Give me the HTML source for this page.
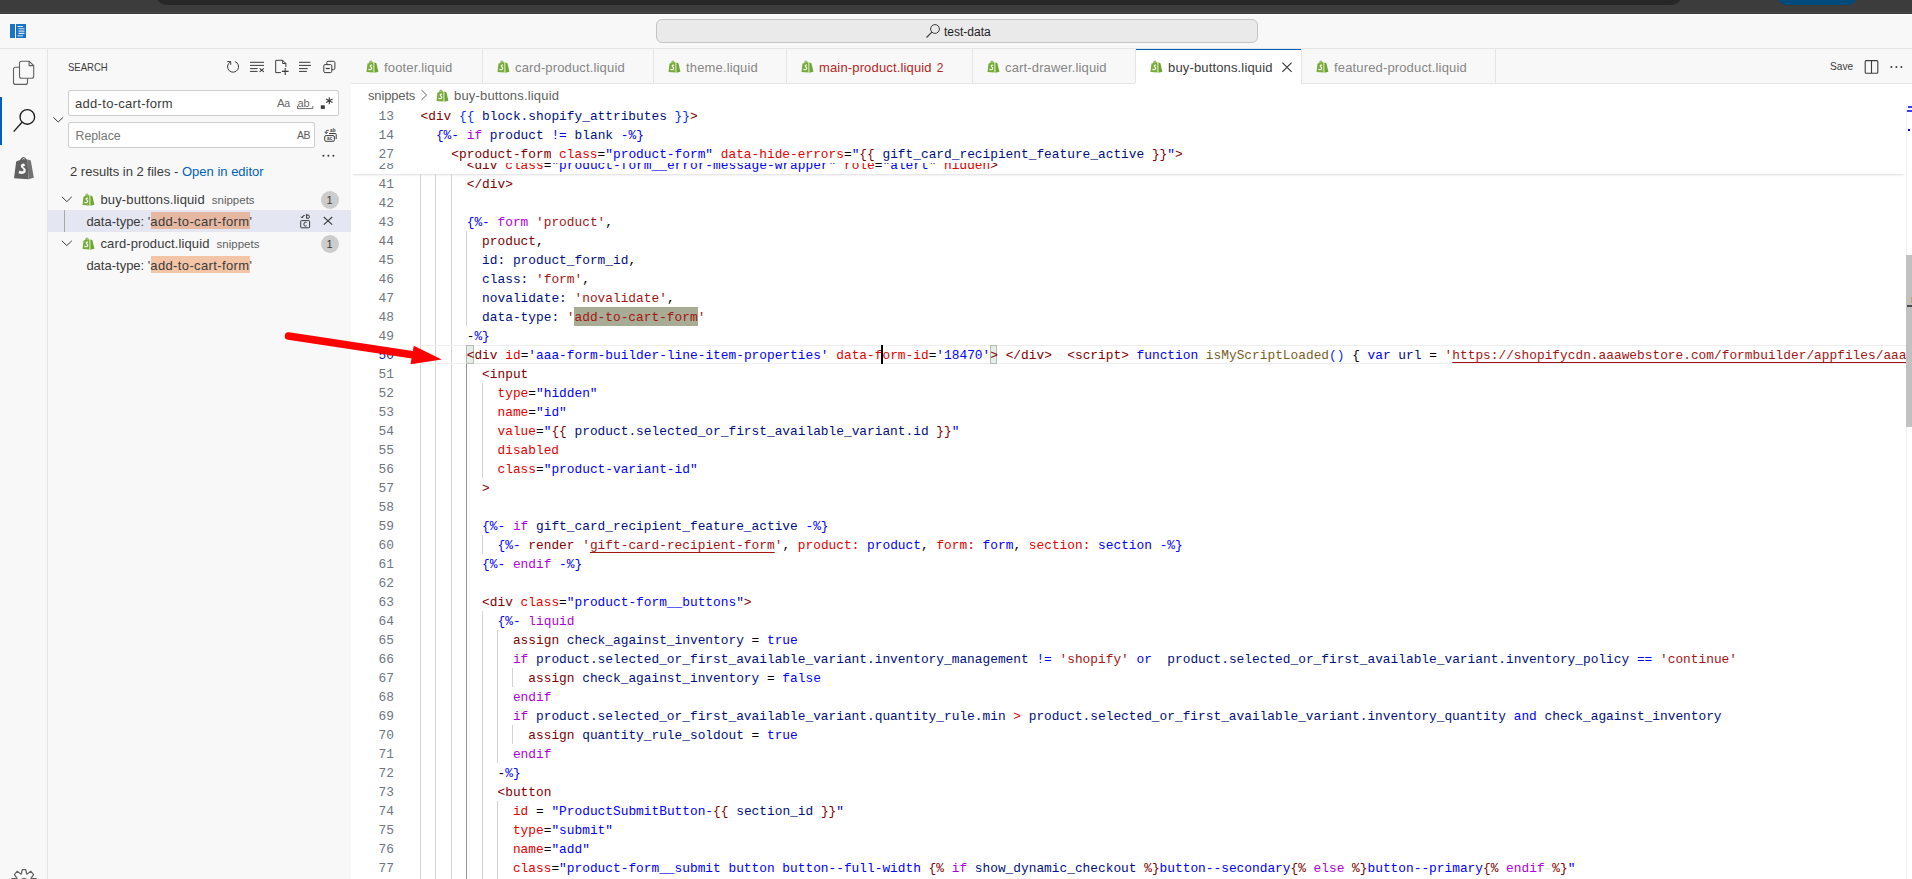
<!DOCTYPE html><html><head><meta charset="utf-8"><style>*{box-sizing:border-box}
html,body{margin:0;padding:0}
body{width:1912px;height:879px;overflow:hidden;position:relative;background:#f8f8f8;font-family:"Liberation Sans",sans-serif;color:#3b3b3b}
.abs{position:absolute}
#topstrip{left:0;top:0;width:1912px;height:15px;background:linear-gradient(#3c3c3c 0,#3c3c3c 12px,#464946 12px,#464946 13px,#383a38 13px,#383a38 14px,#ffffff 14px,#ffffff 15px)}
#topdark{left:156px;top:-10px;width:1526px;height:15px;background:#272727;border-radius:0 0 11px 11px}
#topblue{left:1777px;top:-10px;width:81px;height:15px;background:#004a7c;border-radius:0 0 10px 10px}
#titlebar{left:0;top:15px;width:1912px;height:34px;background:#f8f8f8;border-bottom:1px solid #e5e5e5}
#cmd{left:656px;top:19px;width:602px;height:24px;background:#eaeaea;border:1px solid #c5c5c5;border-radius:6px}
#cmdtext{left:944px;top:24px;font-size:12px;color:#1e1e1e;white-space:pre}
#activity{left:0;top:49px;width:48px;height:830px;background:#f8f8f8;border-right:1px solid #e5e5e5}
#actind{left:0;top:97px;width:2px;height:48px;background:#005fb8}
#sidebar{left:48px;top:49px;width:304px;height:830px;background:#f8f8f8;border-right:1px solid #e5e5e5}
.txt{position:absolute;white-space:pre;line-height:1}
#tabs{left:351px;top:49px;width:1561px;height:35px;background:#f8f8f8;border-bottom:1px solid #e5e5e5}
.tab{position:absolute;top:0;height:35px;border-right:1px solid #e5e5e5;background:#f8f8f8}
.tab.active{background:#fff;border-top:1px solid #005fb8;height:35px}
.tabt{position:absolute;top:11px;font-size:13px;color:#868686;white-space:pre;line-height:1}
#editor{left:351px;top:84px;width:1561px;height:795px;background:#fff}
.code{position:absolute;padding-top:1px;left:420px;font-family:"Liberation Mono",monospace;font-size:12.83px;white-space:pre;line-height:19px;height:19px}
.ln{position:absolute;padding-top:1px;left:360px;width:34px;text-align:right;font-family:"Liberation Mono",monospace;font-size:12.83px;line-height:19px;height:19px;color:#6e7681}
.t{color:#800000}.a{color:#e50000}.s{color:#0000ff}.q{color:#a31515}.k{color:#af00db}.b{color:#0000ff}.v{color:#001080}.p{color:#000}.f{color:#795e26}
.guide{position:absolute;width:1px;background:#d3d3d3}
.ul{text-decoration:underline;text-decoration-color:#a31515;text-underline-offset:3px;text-decoration-thickness:1px}
.br{color:#0431fa}
</style></head><body><div id="topstrip" class="abs"></div><div id="topdark" class="abs"></div><div id="topblue" class="abs"></div>
<div id="titlebar" class="abs"></div>
<svg class="abs" style="left:10px;top:24px" width="17" height="15" viewBox="0 0 17 15">
<rect x="0" y="0" width="5" height="14" fill="#1a73c3"/>
<rect x="6" y="0" width="10" height="14" fill="#1a73c3"/>
<rect x="7.5" y="2" width="5.5" height="1" fill="#dfeaf5"/>
<rect x="8.5" y="4.3" width="6" height="1" fill="#dfeaf5"/>
<rect x="8.5" y="6.3" width="6" height="2" fill="#9cc3e6"/>
<rect x="8.5" y="9" width="6" height="1" fill="#dfeaf5"/>
<rect x="7.5" y="11.3" width="5.5" height="1" fill="#dfeaf5"/>
</svg>
<div id="cmd" class="abs"></div>
<svg class="abs" style="left:925px;top:23px" width="16" height="16" viewBox="0 0 16 16">
<circle cx="10" cy="6" r="4.4" fill="none" stroke="#3b3b3b" stroke-width="1"/>
<line x1="6.9" y1="9.1" x2="1.5" y2="14.5" stroke="#3b3b3b" stroke-width="1.1"/>
</svg>
<div class="txt" style="left:944px;top:26px;font-size:12px;color:#1e1e1e">test-data</div>
<div id="activity" class="abs"></div>
<div id="actind" class="abs"></div>
<svg class="abs" style="left:12px;top:60px" width="24" height="26" viewBox="0 0 24 26">
<path d="M7.5 7.3 H3.5 Q1.5 7.3 1.5 9.3 V22.4 Q1.5 24.4 3.5 24.4 H13.5 Q15.5 24.4 15.5 22.4 V18.2" fill="none" stroke="#616161" stroke-width="1.1"/>
<path d="M9.5 1.3 H17.1 L21.7 5.6 V16.2 Q21.7 18.2 19.7 18.2 H9.5 Q7.5 18.2 7.5 16.2 V3.3 Q7.5 1.3 9.5 1.3 Z" fill="none" stroke="#616161" stroke-width="1.1"/>
<path d="M17.1 1.3 V5.6 H21.7" fill="none" stroke="#616161" stroke-width="1.1"/>
</svg>
<svg class="abs" style="left:12px;top:107px" width="26" height="28" viewBox="0 0 26 28">
<circle cx="15.3" cy="9.9" r="7.3" fill="none" stroke="#1f1f1f" stroke-width="1.35"/>
<line x1="10" y1="15.2" x2="1.7" y2="24.6" stroke="#1f1f1f" stroke-width="1.35"/>
</svg>
<svg class="abs" style="left:13px;top:156px" width="22" height="24" viewBox="0 0 22 24">
<path d="M1 22.2 L3.2 5.4 Q5 4.6 7 4 Q8.5 0.8 10.8 1 Q12.4 1.2 13.4 3.2 L14.6 3.4 L15.4 23.3 Z" fill="#616161"/>
<path d="M14.6 3.4 Q16 3.6 17.8 4.6 L20.8 21.8 L15.4 23.3 Z" fill="#727272"/>
<path d="M9.5 3.2 Q10.5 1.9 11.6 3" fill="none" stroke="#f8f8f8" stroke-width="0.9"/>
<path d="M11.2 7.6 Q8.4 7.4 7.8 9.6 Q7.5 11.6 9.8 12.8 Q11 13.6 10.4 14.8 Q9.4 16 6.3 14.4 L5.5 17.2 Q8.6 18.6 11.3 17.3 Q13.4 15.8 12.6 13.3 Q12 12 10.6 11.2 Q9.7 10.4 10.6 9.9 Q11.6 9.6 12.4 10.2 Z" fill="#f8f8f8"/>
</svg>
<svg class="abs" style="left:0px;top:860px" width="48" height="19" viewBox="0 860 48 19">
<path d="M11.5 878.6 H17.2 L14.4 874.6 L17.3 871.2 L21.3 874.4 L22.2 869.7 H25.8 L26.7 874.4 L30.7 871.2 L33.6 874.6 L30.8 878.6 H36.5" fill="none" stroke="#616161" stroke-width="1.2" stroke-linejoin="bevel"/>
<circle cx="24" cy="881.5" r="3.6" fill="#616161"/>
</svg>

<div id="sidebar" class="abs"></div>
<div class="txt" style="left:68px;top:62px;font-size:11px;transform:scaleX(0.865);transform-origin:0 0;color:#3b3b3b">SEARCH</div>
<svg class="abs" style="left:224px;top:58px" width="116" height="18" viewBox="0 0 116 18">
 <g fill="none" stroke="#3b3b3b" stroke-width="1">
  <path d="M10.9 3.5 A5.5 5.5 0 1 1 6.2 4"/>
  <path d="M3.2 3.6 H6.7 V6.8" />
  <path d="M26 4.3 H40 M26 7.4 H40 M26 10.6 H33.6 M26 13.4 H33.6"/>
  <path d="M35.6 10.3 L39.8 13.8 M39.8 10.3 L35.6 13.8" stroke-width="1.1"/>
  <path d="M56.9 14.6 H51.7 V2.3 H58.7 L61.9 5.5 V9"/>
  <path d="M58.7 2.3 V5.5 H61.9"/>
  <path d="M57.8 13.4 H64.6 M61.2 10 V17" stroke-width="1.1"/>
  <path d="M75 4.3 H86.4 M75 7.4 H87 M75 10.6 H83.7 M75 13.4 H82.9"/>
  <rect x="99.8" y="6.6" width="8" height="8" rx="1.3"/>
  <path d="M102.8 6.6 V4.6 Q102.8 3.3 104.1 3.3 H109.6 Q110.9 3.3 110.9 4.6 V10.3 Q110.9 11.6 109.6 11.6 H107.8"/>
  <path d="M101.7 10.5 H105.8" stroke-width="1.2"/>
 </g>
</svg>
<div class="abs" style="left:68px;top:90px;width:271px;height:26px;background:#fff;border:1px solid #cecece;border-radius:2px"></div>
<div class="txt" style="left:75px;top:97px;font-size:13px;letter-spacing:0.3px;color:#3b3b3b">add-to-cart-form</div>
<div class="txt" style="left:277px;top:98px;font-size:11.5px;letter-spacing:-0.5px;color:#6a6a6a">A<span style="font-size:10.5px">a</span></div>
<svg class="abs" style="left:295px;top:94px" width="42" height="18" viewBox="0 0 42 18">
 <path d="M2.5 12 V14.6 H17.8 V12" fill="none" stroke="#6a6a6a" stroke-width="1"/>
 <rect x="25.8" y="11.3" width="4" height="3.6" fill="#3b3b3b"/>
 <path d="M34.3 3.2 V10.3 M31.1 4.9 L37.5 8.6 M31.1 8.6 L37.5 4.9" stroke="#3b3b3b" stroke-width="1.1"/>
</svg>
<div class="txt" style="left:297.5px;top:97.5px;font-size:11px;letter-spacing:-0.2px;color:#6a6a6a">ab</div>
<svg class="abs" style="left:50px;top:113px" width="16" height="12" viewBox="0 0 16 12">
 <path d="M3.3 4.3 L8.2 9 L13.1 4.3" fill="none" stroke="#3b3b3b" stroke-width="1"/>
</svg>
<div class="abs" style="left:68px;top:122px;width:247px;height:26px;background:#fff;border:1px solid #cecece;border-radius:2px"></div>
<div class="txt" style="left:75.5px;top:129.5px;font-size:12.3px;color:#767676">Replace</div>
<div class="txt" style="left:297px;top:130px;font-size:10.5px;letter-spacing:-0.4px;color:#5a5a5a">AB</div>
<svg class="abs" style="left:320px;top:124px" width="20" height="22" viewBox="0 0 20 22">
 <g fill="none" stroke="#3b3b3b" stroke-width="1">
  <rect x="4.7" y="11.6" width="9.7" height="5.7" rx="1.4"/>
  <path d="M9 9.5 H15.1 Q16.2 9.5 16.2 10.6 V15"/>
  <path d="M8.7 6.4 H7.1 Q6.2 6.4 6.2 7.3 V9.2"/>
  <path d="M4.6 7.9 L6.2 9.5 L7.8 7.9"/>
 </g>
 <text x="6.9" y="15.8" font-size="4.6" font-family="Liberation Sans" font-weight="bold" fill="#3b3b3b" letter-spacing="0.3">ac</text>
 <text x="9.9" y="7.5" font-size="4.6" font-family="Liberation Sans" font-weight="bold" fill="#3b3b3b" letter-spacing="0.3">ab</text>
</svg>
<svg class="abs" style="left:320px;top:150px" width="16" height="10" viewBox="0 0 16 10">
 <circle cx="3.4" cy="5.8" r="1" fill="#3b3b3b"/><circle cx="8.4" cy="5.8" r="1" fill="#3b3b3b"/><circle cx="13.4" cy="5.8" r="1" fill="#3b3b3b"/>
</svg>
<div class="txt" style="left:70px;top:164.5px;font-size:13px;color:#3b3b3b">2 results in 2 files - <span style="color:#005fb8">Open in editor</span></div>
<!-- tree -->
<div class="abs" style="left:48px;top:210px;width:303px;height:22px;background:#e4e6f1"></div>
<div class="abs" style="left:64px;top:210px;width:1px;height:22px;background:#a9a9a9"></div>
<svg class="abs" style="left:81.5px;top:192.5px" width="13" height="13" viewBox="0 0 13 13"><path d="M0.5 12 L1.5 3.6 L2.9 3.2 Q3.5 0.7 4.9 0.6 Q6.2 0.6 6.8 2.6 L7.5 2.5 L7.6 12.6 Z" fill="#76ab38"/><path d="M3.8 3.1 Q4.3 1.4 5 1.4 Q5.6 1.5 6 2.7" fill="none" stroke="#d6e6b8" stroke-width="0.6"/><path d="M8.2 2.6 Q9.2 2.6 10.4 3.2 L12.4 11.8 L8.3 12.7 Z" fill="#6fa535"/><path d="M7.55 2.5 L8.25 2.6 L8.3 12.7 L7.6 12.6 Z" fill="#c9dea0"/><path d="M5.9 4.6 Q4 4.3 3.6 5.7 Q3.4 6.8 4.6 7.5 Q5.3 8 4.9 8.7 Q4.3 9.3 2.6 8.4 L2.3 9.9 Q3.9 10.7 5.4 9.9 Q6.6 9.1 6.2 7.7 Q5.9 7 5.1 6.5 Q4.6 6.1 5.1 5.8 Q5.6 5.7 6.1 6 Z" fill="#f4f8ec"/></svg><svg class="abs" style="left:81.5px;top:236.5px" width="13" height="13" viewBox="0 0 13 13"><path d="M0.5 12 L1.5 3.6 L2.9 3.2 Q3.5 0.7 4.9 0.6 Q6.2 0.6 6.8 2.6 L7.5 2.5 L7.6 12.6 Z" fill="#76ab38"/><path d="M3.8 3.1 Q4.3 1.4 5 1.4 Q5.6 1.5 6 2.7" fill="none" stroke="#d6e6b8" stroke-width="0.6"/><path d="M8.2 2.6 Q9.2 2.6 10.4 3.2 L12.4 11.8 L8.3 12.7 Z" fill="#6fa535"/><path d="M7.55 2.5 L8.25 2.6 L8.3 12.7 L7.6 12.6 Z" fill="#c9dea0"/><path d="M5.9 4.6 Q4 4.3 3.6 5.7 Q3.4 6.8 4.6 7.5 Q5.3 8 4.9 8.7 Q4.3 9.3 2.6 8.4 L2.3 9.9 Q3.9 10.7 5.4 9.9 Q6.6 9.1 6.2 7.7 Q5.9 7 5.1 6.5 Q4.6 6.1 5.1 5.8 Q5.6 5.7 6.1 6 Z" fill="#f4f8ec"/></svg>
<svg class="abs" style="left:58px;top:193px" width="16" height="12" viewBox="0 0 16 12">
 <path d="M3.8 3.8 L8.8 8.6 L13.8 3.8" fill="none" stroke="#3b3b3b" stroke-width="1"/>
</svg>
<svg class="abs" style="left:58px;top:237px" width="16" height="12" viewBox="0 0 16 12">
 <path d="M3.8 3.8 L8.8 8.6 L13.8 3.8" fill="none" stroke="#3b3b3b" stroke-width="1"/>
</svg>
<div class="txt" style="left:100.5px;top:192.5px;font-size:13px;letter-spacing:0.13px;color:#3b3b3b">buy-buttons.liquid<span style="font-size:11.5px;letter-spacing:0;color:#5f5f5f;margin-left:7px">snippets</span></div>
<div class="txt" style="left:100.5px;top:236.5px;font-size:13px;letter-spacing:0.11px;color:#3b3b3b">card-product.liquid<span style="font-size:11.5px;letter-spacing:0;color:#5f5f5f;margin-left:7px">snippets</span></div>
<div class="abs" style="left:321px;top:191px;width:18px;height:18px;border-radius:9px;background:#cccccc"></div>
<div class="abs" style="left:321px;top:235px;width:18px;height:18px;border-radius:9px;background:#cccccc"></div>
<div class="txt" style="left:326.5px;top:195px;font-size:11px;color:#3b3b3b">1</div>
<div class="txt" style="left:326.5px;top:239px;font-size:11px;color:#3b3b3b">1</div>
<div class="abs" style="left:150.8px;top:212px;width:99.2px;height:17px;background:rgb(230,184,161)"></div>
<div class="txt" style="left:86.4px;top:214.5px;font-size:13px;color:#3b3b3b">data-type: '<span style="letter-spacing:0.37px">add-to-cart-form</span>'</div>
<div class="abs" style="left:150.8px;top:256px;width:99.2px;height:17px;background:rgb(243,196,166)"></div>
<div class="txt" style="left:86.4px;top:258.5px;font-size:13px;color:#3b3b3b">data-type: '<span style="letter-spacing:0.37px">add-to-cart-form</span>'</div>
<svg class="abs" style="left:297px;top:212px" width="16" height="18" viewBox="0 0 16 18">
 <g fill="none" stroke="#3b3b3b" stroke-width="1">
  <rect x="3.7" y="8.6" width="8.9" height="7.2" rx="0.8"/>
  <path d="M9.6 6.6 V1.8 M9.6 4.2 Q9.8 3 11 3 Q12.4 3 12.4 4.7 Q12.4 6.4 11 6.4 Q9.8 6.4 9.6 5.3"/>
  <path d="M7.8 3.4 Q5.6 3.2 5.2 5.6 M4 4.6 L5.2 6 L6.4 4.6"/>
  <path d="M9.6 10.7 Q9.2 10.2 8.3 10.2 Q6.9 10.2 6.9 12.2 Q6.9 14.2 8.3 14.2 Q9.2 14.2 9.6 13.7"/>
 </g>
</svg>
<svg class="abs" style="left:322px;top:214px" width="14" height="14" viewBox="0 0 14 14">
 <path d="M1.8 3 L10.2 10.7 M10.2 3 L1.8 10.7" stroke="#3b3b3b" stroke-width="1.1"/>
</svg>

<div id="tabs" class="abs"></div>
<div class="abs" style="left:351px;top:49px;width:131px;height:34px;background:#f8f8f8"></div>
<div class="abs" style="left:482px;top:49px;width:1px;height:34px;background:#e5e5e5;z-index:2"></div>
<svg class="abs" style="left:365.5px;top:59.5px" width="13" height="13" viewBox="0 0 13 13"><path d="M0.5 12 L1.5 3.6 L2.9 3.2 Q3.5 0.7 4.9 0.6 Q6.2 0.6 6.8 2.6 L7.5 2.5 L7.6 12.6 Z" fill="#76ab38"/><path d="M3.8 3.1 Q4.3 1.4 5 1.4 Q5.6 1.5 6 2.7" fill="none" stroke="#d6e6b8" stroke-width="0.6"/><path d="M8.2 2.6 Q9.2 2.6 10.4 3.2 L12.4 11.8 L8.3 12.7 Z" fill="#6fa535"/><path d="M7.55 2.5 L8.25 2.6 L8.3 12.7 L7.6 12.6 Z" fill="#c9dea0"/><path d="M5.9 4.6 Q4 4.3 3.6 5.7 Q3.4 6.8 4.6 7.5 Q5.3 8 4.9 8.7 Q4.3 9.3 2.6 8.4 L2.3 9.9 Q3.9 10.7 5.4 9.9 Q6.6 9.1 6.2 7.7 Q5.9 7 5.1 6.5 Q4.6 6.1 5.1 5.8 Q5.6 5.7 6.1 6 Z" fill="#f4f8ec"/></svg>
<div class="txt" style="left:384px;top:60.5px;font-size:13px;letter-spacing:0.15px;color:#868686">footer.liquid</div>
<div class="abs" style="left:482px;top:49px;width:171px;height:34px;background:#f8f8f8"></div>
<div class="abs" style="left:653px;top:49px;width:1px;height:34px;background:#e5e5e5;z-index:2"></div>
<svg class="abs" style="left:496.5px;top:59.5px" width="13" height="13" viewBox="0 0 13 13"><path d="M0.5 12 L1.5 3.6 L2.9 3.2 Q3.5 0.7 4.9 0.6 Q6.2 0.6 6.8 2.6 L7.5 2.5 L7.6 12.6 Z" fill="#76ab38"/><path d="M3.8 3.1 Q4.3 1.4 5 1.4 Q5.6 1.5 6 2.7" fill="none" stroke="#d6e6b8" stroke-width="0.6"/><path d="M8.2 2.6 Q9.2 2.6 10.4 3.2 L12.4 11.8 L8.3 12.7 Z" fill="#6fa535"/><path d="M7.55 2.5 L8.25 2.6 L8.3 12.7 L7.6 12.6 Z" fill="#c9dea0"/><path d="M5.9 4.6 Q4 4.3 3.6 5.7 Q3.4 6.8 4.6 7.5 Q5.3 8 4.9 8.7 Q4.3 9.3 2.6 8.4 L2.3 9.9 Q3.9 10.7 5.4 9.9 Q6.6 9.1 6.2 7.7 Q5.9 7 5.1 6.5 Q4.6 6.1 5.1 5.8 Q5.6 5.7 6.1 6 Z" fill="#f4f8ec"/></svg>
<div class="txt" style="left:515px;top:60.5px;font-size:13px;letter-spacing:0.15px;color:#868686">card-product.liquid</div>
<div class="abs" style="left:653px;top:49px;width:133px;height:34px;background:#f8f8f8"></div>
<div class="abs" style="left:786px;top:49px;width:1px;height:34px;background:#e5e5e5;z-index:2"></div>
<svg class="abs" style="left:667.5px;top:59.5px" width="13" height="13" viewBox="0 0 13 13"><path d="M0.5 12 L1.5 3.6 L2.9 3.2 Q3.5 0.7 4.9 0.6 Q6.2 0.6 6.8 2.6 L7.5 2.5 L7.6 12.6 Z" fill="#76ab38"/><path d="M3.8 3.1 Q4.3 1.4 5 1.4 Q5.6 1.5 6 2.7" fill="none" stroke="#d6e6b8" stroke-width="0.6"/><path d="M8.2 2.6 Q9.2 2.6 10.4 3.2 L12.4 11.8 L8.3 12.7 Z" fill="#6fa535"/><path d="M7.55 2.5 L8.25 2.6 L8.3 12.7 L7.6 12.6 Z" fill="#c9dea0"/><path d="M5.9 4.6 Q4 4.3 3.6 5.7 Q3.4 6.8 4.6 7.5 Q5.3 8 4.9 8.7 Q4.3 9.3 2.6 8.4 L2.3 9.9 Q3.9 10.7 5.4 9.9 Q6.6 9.1 6.2 7.7 Q5.9 7 5.1 6.5 Q4.6 6.1 5.1 5.8 Q5.6 5.7 6.1 6 Z" fill="#f4f8ec"/></svg>
<div class="txt" style="left:686px;top:60.5px;font-size:13px;letter-spacing:0.15px;color:#868686">theme.liquid</div>
<div class="abs" style="left:786px;top:49px;width:186px;height:34px;background:#f8f8f8"></div>
<div class="abs" style="left:972px;top:49px;width:1px;height:34px;background:#e5e5e5;z-index:2"></div>
<svg class="abs" style="left:800.5px;top:59.5px" width="13" height="13" viewBox="0 0 13 13"><path d="M0.5 12 L1.5 3.6 L2.9 3.2 Q3.5 0.7 4.9 0.6 Q6.2 0.6 6.8 2.6 L7.5 2.5 L7.6 12.6 Z" fill="#76ab38"/><path d="M3.8 3.1 Q4.3 1.4 5 1.4 Q5.6 1.5 6 2.7" fill="none" stroke="#d6e6b8" stroke-width="0.6"/><path d="M8.2 2.6 Q9.2 2.6 10.4 3.2 L12.4 11.8 L8.3 12.7 Z" fill="#6fa535"/><path d="M7.55 2.5 L8.25 2.6 L8.3 12.7 L7.6 12.6 Z" fill="#c9dea0"/><path d="M5.9 4.6 Q4 4.3 3.6 5.7 Q3.4 6.8 4.6 7.5 Q5.3 8 4.9 8.7 Q4.3 9.3 2.6 8.4 L2.3 9.9 Q3.9 10.7 5.4 9.9 Q6.6 9.1 6.2 7.7 Q5.9 7 5.1 6.5 Q4.6 6.1 5.1 5.8 Q5.6 5.7 6.1 6 Z" fill="#f4f8ec"/></svg>
<div class="txt" style="left:819px;top:60.5px;font-size:13px;letter-spacing:0.15px;color:#b3261e">main-product.liquid<span style="letter-spacing:0;font-size:12px;margin-left:5px">2</span></div>
<div class="abs" style="left:972px;top:49px;width:163px;height:34px;background:#f8f8f8"></div>
<div class="abs" style="left:1135px;top:49px;width:1px;height:34px;background:#e5e5e5;z-index:2"></div>
<svg class="abs" style="left:986.5px;top:59.5px" width="13" height="13" viewBox="0 0 13 13"><path d="M0.5 12 L1.5 3.6 L2.9 3.2 Q3.5 0.7 4.9 0.6 Q6.2 0.6 6.8 2.6 L7.5 2.5 L7.6 12.6 Z" fill="#76ab38"/><path d="M3.8 3.1 Q4.3 1.4 5 1.4 Q5.6 1.5 6 2.7" fill="none" stroke="#d6e6b8" stroke-width="0.6"/><path d="M8.2 2.6 Q9.2 2.6 10.4 3.2 L12.4 11.8 L8.3 12.7 Z" fill="#6fa535"/><path d="M7.55 2.5 L8.25 2.6 L8.3 12.7 L7.6 12.6 Z" fill="#c9dea0"/><path d="M5.9 4.6 Q4 4.3 3.6 5.7 Q3.4 6.8 4.6 7.5 Q5.3 8 4.9 8.7 Q4.3 9.3 2.6 8.4 L2.3 9.9 Q3.9 10.7 5.4 9.9 Q6.6 9.1 6.2 7.7 Q5.9 7 5.1 6.5 Q4.6 6.1 5.1 5.8 Q5.6 5.7 6.1 6 Z" fill="#f4f8ec"/></svg>
<div class="txt" style="left:1005px;top:60.5px;font-size:13px;letter-spacing:0.15px;color:#868686">cart-drawer.liquid</div>
<div class="abs" style="left:1135px;top:49px;width:166px;height:35px;background:#fff"></div>
<div class="abs" style="left:1301px;top:49px;width:1px;height:34px;background:#e5e5e5;z-index:2"></div>
<div class="abs" style="left:1135px;top:49px;width:166px;height:1px;background:#005fb8"></div>
<svg class="abs" style="left:1149.5px;top:59.5px" width="13" height="13" viewBox="0 0 13 13"><path d="M0.5 12 L1.5 3.6 L2.9 3.2 Q3.5 0.7 4.9 0.6 Q6.2 0.6 6.8 2.6 L7.5 2.5 L7.6 12.6 Z" fill="#76ab38"/><path d="M3.8 3.1 Q4.3 1.4 5 1.4 Q5.6 1.5 6 2.7" fill="none" stroke="#d6e6b8" stroke-width="0.6"/><path d="M8.2 2.6 Q9.2 2.6 10.4 3.2 L12.4 11.8 L8.3 12.7 Z" fill="#6fa535"/><path d="M7.55 2.5 L8.25 2.6 L8.3 12.7 L7.6 12.6 Z" fill="#c9dea0"/><path d="M5.9 4.6 Q4 4.3 3.6 5.7 Q3.4 6.8 4.6 7.5 Q5.3 8 4.9 8.7 Q4.3 9.3 2.6 8.4 L2.3 9.9 Q3.9 10.7 5.4 9.9 Q6.6 9.1 6.2 7.7 Q5.9 7 5.1 6.5 Q4.6 6.1 5.1 5.8 Q5.6 5.7 6.1 6 Z" fill="#f4f8ec"/></svg>
<div class="txt" style="left:1168px;top:60.5px;font-size:13px;letter-spacing:0.15px;color:#3b3b3b">buy-buttons.liquid</div>
<svg class="abs" style="left:1280px;top:59px" width="14" height="16" viewBox="0 0 14 16"><path d="M2.4 3.6 L11.6 12.8 M11.6 3.6 L2.4 12.8" stroke="#3b3b3b" stroke-width="1.2"/></svg>
<div class="abs" style="left:1301px;top:49px;width:194px;height:34px;background:#f8f8f8"></div>
<div class="abs" style="left:1495px;top:49px;width:1px;height:34px;background:#e5e5e5;z-index:2"></div>
<svg class="abs" style="left:1315.5px;top:59.5px" width="13" height="13" viewBox="0 0 13 13"><path d="M0.5 12 L1.5 3.6 L2.9 3.2 Q3.5 0.7 4.9 0.6 Q6.2 0.6 6.8 2.6 L7.5 2.5 L7.6 12.6 Z" fill="#76ab38"/><path d="M3.8 3.1 Q4.3 1.4 5 1.4 Q5.6 1.5 6 2.7" fill="none" stroke="#d6e6b8" stroke-width="0.6"/><path d="M8.2 2.6 Q9.2 2.6 10.4 3.2 L12.4 11.8 L8.3 12.7 Z" fill="#6fa535"/><path d="M7.55 2.5 L8.25 2.6 L8.3 12.7 L7.6 12.6 Z" fill="#c9dea0"/><path d="M5.9 4.6 Q4 4.3 3.6 5.7 Q3.4 6.8 4.6 7.5 Q5.3 8 4.9 8.7 Q4.3 9.3 2.6 8.4 L2.3 9.9 Q3.9 10.7 5.4 9.9 Q6.6 9.1 6.2 7.7 Q5.9 7 5.1 6.5 Q4.6 6.1 5.1 5.8 Q5.6 5.7 6.1 6 Z" fill="#f4f8ec"/></svg>
<div class="txt" style="left:1334px;top:60.5px;font-size:13px;letter-spacing:0.15px;color:#868686">featured-product.liquid</div>
<div class="txt" style="left:1830px;top:61px;font-size:11.5px;transform:scaleX(0.88);transform-origin:0 0;color:#3b3b3b">Save</div>
<svg class="abs" style="left:1863px;top:59px" width="17" height="16" viewBox="0 0 17 16"><rect x="2.2" y="1.6" width="12.6" height="12.6" rx="1" fill="none" stroke="#3b3b3b" stroke-width="1.1"/><line x1="8.5" y1="1.6" x2="8.5" y2="14.2" stroke="#3b3b3b" stroke-width="1.1"/></svg>
<svg class="abs" style="left:1889px;top:62px" width="16" height="10" viewBox="0 0 16 10"><circle cx="2.4" cy="5" r="1" fill="#3b3b3b"/><circle cx="7.4" cy="5" r="1" fill="#3b3b3b"/><circle cx="12.4" cy="5" r="1" fill="#3b3b3b"/></svg>
<div id="editor" class="abs"></div>
<div class="txt" style="left:368px;top:89px;font-size:13px;letter-spacing:-0.15px;color:#616161">snippets</div>
<svg class="abs" style="left:418px;top:87px" width="12" height="16" viewBox="0 0 12 16"><path d="M3.4 3 L8.6 8 L3.4 13" fill="none" stroke="#616161" stroke-width="1"/></svg>
<svg class="abs" style="left:435.5px;top:88.5px" width="13" height="13" viewBox="0 0 13 13"><path d="M0.5 12 L1.5 3.6 L2.9 3.2 Q3.5 0.7 4.9 0.6 Q6.2 0.6 6.8 2.6 L7.5 2.5 L7.6 12.6 Z" fill="#76ab38"/><path d="M3.8 3.1 Q4.3 1.4 5 1.4 Q5.6 1.5 6 2.7" fill="none" stroke="#d6e6b8" stroke-width="0.6"/><path d="M8.2 2.6 Q9.2 2.6 10.4 3.2 L12.4 11.8 L8.3 12.7 Z" fill="#6fa535"/><path d="M7.55 2.5 L8.25 2.6 L8.3 12.7 L7.6 12.6 Z" fill="#c9dea0"/><path d="M5.9 4.6 Q4 4.3 3.6 5.7 Q3.4 6.8 4.6 7.5 Q5.3 8 4.9 8.7 Q4.3 9.3 2.6 8.4 L2.3 9.9 Q3.9 10.7 5.4 9.9 Q6.6 9.1 6.2 7.7 Q5.9 7 5.1 6.5 Q4.6 6.1 5.1 5.8 Q5.6 5.7 6.1 6 Z" fill="#f4f8ec"/></svg>
<div class="txt" style="left:454px;top:89px;font-size:13px;letter-spacing:0.18px;color:#616161">buy-buttons.liquid</div>
<div class="guide" style="left:420px;top:174px;height:19px;background:#d3d3d3"></div>
<div class="guide" style="left:435px;top:174px;height:19px;background:#d3d3d3"></div>
<div class="guide" style="left:451px;top:174px;height:19px;background:#d3d3d3"></div>
<div class="guide" style="left:420px;top:193px;height:19px;background:#d3d3d3"></div>
<div class="guide" style="left:435px;top:193px;height:19px;background:#d3d3d3"></div>
<div class="guide" style="left:451px;top:193px;height:19px;background:#d3d3d3"></div>
<div class="guide" style="left:420px;top:212px;height:19px;background:#d3d3d3"></div>
<div class="guide" style="left:435px;top:212px;height:19px;background:#d3d3d3"></div>
<div class="guide" style="left:451px;top:212px;height:19px;background:#d3d3d3"></div>
<div class="guide" style="left:420px;top:231px;height:19px;background:#d3d3d3"></div>
<div class="guide" style="left:435px;top:231px;height:19px;background:#d3d3d3"></div>
<div class="guide" style="left:451px;top:231px;height:19px;background:#d3d3d3"></div>
<div class="guide" style="left:466px;top:231px;height:19px;background:#d3d3d3"></div>
<div class="guide" style="left:420px;top:250px;height:19px;background:#d3d3d3"></div>
<div class="guide" style="left:435px;top:250px;height:19px;background:#d3d3d3"></div>
<div class="guide" style="left:451px;top:250px;height:19px;background:#d3d3d3"></div>
<div class="guide" style="left:466px;top:250px;height:19px;background:#d3d3d3"></div>
<div class="guide" style="left:420px;top:269px;height:19px;background:#d3d3d3"></div>
<div class="guide" style="left:435px;top:269px;height:19px;background:#d3d3d3"></div>
<div class="guide" style="left:451px;top:269px;height:19px;background:#d3d3d3"></div>
<div class="guide" style="left:466px;top:269px;height:19px;background:#d3d3d3"></div>
<div class="guide" style="left:420px;top:288px;height:19px;background:#d3d3d3"></div>
<div class="guide" style="left:435px;top:288px;height:19px;background:#d3d3d3"></div>
<div class="guide" style="left:451px;top:288px;height:19px;background:#d3d3d3"></div>
<div class="guide" style="left:466px;top:288px;height:19px;background:#d3d3d3"></div>
<div class="guide" style="left:420px;top:307px;height:19px;background:#d3d3d3"></div>
<div class="guide" style="left:435px;top:307px;height:19px;background:#d3d3d3"></div>
<div class="guide" style="left:451px;top:307px;height:19px;background:#d3d3d3"></div>
<div class="guide" style="left:466px;top:307px;height:19px;background:#d3d3d3"></div>
<div class="guide" style="left:420px;top:326px;height:19px;background:#d3d3d3"></div>
<div class="guide" style="left:435px;top:326px;height:19px;background:#d3d3d3"></div>
<div class="guide" style="left:451px;top:326px;height:19px;background:#d3d3d3"></div>
<div class="guide" style="left:420px;top:345px;height:19px;background:#d3d3d3"></div>
<div class="guide" style="left:435px;top:345px;height:19px;background:#d3d3d3"></div>
<div class="guide" style="left:451px;top:345px;height:19px;background:#d3d3d3"></div>
<div class="guide" style="left:420px;top:364px;height:19px;background:#d3d3d3"></div>
<div class="guide" style="left:435px;top:364px;height:19px;background:#d3d3d3"></div>
<div class="guide" style="left:451px;top:364px;height:19px;background:#d3d3d3"></div>
<div class="guide" style="left:466px;top:364px;height:19px;background:#939393"></div>
<div class="guide" style="left:420px;top:383px;height:19px;background:#d3d3d3"></div>
<div class="guide" style="left:435px;top:383px;height:19px;background:#d3d3d3"></div>
<div class="guide" style="left:451px;top:383px;height:19px;background:#d3d3d3"></div>
<div class="guide" style="left:466px;top:383px;height:19px;background:#939393"></div>
<div class="guide" style="left:482px;top:383px;height:19px;background:#d3d3d3"></div>
<div class="guide" style="left:420px;top:402px;height:19px;background:#d3d3d3"></div>
<div class="guide" style="left:435px;top:402px;height:19px;background:#d3d3d3"></div>
<div class="guide" style="left:451px;top:402px;height:19px;background:#d3d3d3"></div>
<div class="guide" style="left:466px;top:402px;height:19px;background:#939393"></div>
<div class="guide" style="left:482px;top:402px;height:19px;background:#d3d3d3"></div>
<div class="guide" style="left:420px;top:421px;height:19px;background:#d3d3d3"></div>
<div class="guide" style="left:435px;top:421px;height:19px;background:#d3d3d3"></div>
<div class="guide" style="left:451px;top:421px;height:19px;background:#d3d3d3"></div>
<div class="guide" style="left:466px;top:421px;height:19px;background:#939393"></div>
<div class="guide" style="left:482px;top:421px;height:19px;background:#d3d3d3"></div>
<div class="guide" style="left:420px;top:440px;height:19px;background:#d3d3d3"></div>
<div class="guide" style="left:435px;top:440px;height:19px;background:#d3d3d3"></div>
<div class="guide" style="left:451px;top:440px;height:19px;background:#d3d3d3"></div>
<div class="guide" style="left:466px;top:440px;height:19px;background:#939393"></div>
<div class="guide" style="left:482px;top:440px;height:19px;background:#d3d3d3"></div>
<div class="guide" style="left:420px;top:459px;height:19px;background:#d3d3d3"></div>
<div class="guide" style="left:435px;top:459px;height:19px;background:#d3d3d3"></div>
<div class="guide" style="left:451px;top:459px;height:19px;background:#d3d3d3"></div>
<div class="guide" style="left:466px;top:459px;height:19px;background:#939393"></div>
<div class="guide" style="left:482px;top:459px;height:19px;background:#d3d3d3"></div>
<div class="guide" style="left:420px;top:478px;height:19px;background:#d3d3d3"></div>
<div class="guide" style="left:435px;top:478px;height:19px;background:#d3d3d3"></div>
<div class="guide" style="left:451px;top:478px;height:19px;background:#d3d3d3"></div>
<div class="guide" style="left:466px;top:478px;height:19px;background:#939393"></div>
<div class="guide" style="left:420px;top:497px;height:19px;background:#d3d3d3"></div>
<div class="guide" style="left:435px;top:497px;height:19px;background:#d3d3d3"></div>
<div class="guide" style="left:451px;top:497px;height:19px;background:#d3d3d3"></div>
<div class="guide" style="left:466px;top:497px;height:19px;background:#939393"></div>
<div class="guide" style="left:420px;top:516px;height:19px;background:#d3d3d3"></div>
<div class="guide" style="left:435px;top:516px;height:19px;background:#d3d3d3"></div>
<div class="guide" style="left:451px;top:516px;height:19px;background:#d3d3d3"></div>
<div class="guide" style="left:466px;top:516px;height:19px;background:#939393"></div>
<div class="guide" style="left:420px;top:535px;height:19px;background:#d3d3d3"></div>
<div class="guide" style="left:435px;top:535px;height:19px;background:#d3d3d3"></div>
<div class="guide" style="left:451px;top:535px;height:19px;background:#d3d3d3"></div>
<div class="guide" style="left:466px;top:535px;height:19px;background:#939393"></div>
<div class="guide" style="left:482px;top:535px;height:19px;background:#d3d3d3"></div>
<div class="guide" style="left:420px;top:554px;height:19px;background:#d3d3d3"></div>
<div class="guide" style="left:435px;top:554px;height:19px;background:#d3d3d3"></div>
<div class="guide" style="left:451px;top:554px;height:19px;background:#d3d3d3"></div>
<div class="guide" style="left:466px;top:554px;height:19px;background:#939393"></div>
<div class="guide" style="left:420px;top:573px;height:19px;background:#d3d3d3"></div>
<div class="guide" style="left:435px;top:573px;height:19px;background:#d3d3d3"></div>
<div class="guide" style="left:451px;top:573px;height:19px;background:#d3d3d3"></div>
<div class="guide" style="left:466px;top:573px;height:19px;background:#939393"></div>
<div class="guide" style="left:420px;top:592px;height:19px;background:#d3d3d3"></div>
<div class="guide" style="left:435px;top:592px;height:19px;background:#d3d3d3"></div>
<div class="guide" style="left:451px;top:592px;height:19px;background:#d3d3d3"></div>
<div class="guide" style="left:466px;top:592px;height:19px;background:#939393"></div>
<div class="guide" style="left:420px;top:611px;height:19px;background:#d3d3d3"></div>
<div class="guide" style="left:435px;top:611px;height:19px;background:#d3d3d3"></div>
<div class="guide" style="left:451px;top:611px;height:19px;background:#d3d3d3"></div>
<div class="guide" style="left:466px;top:611px;height:19px;background:#939393"></div>
<div class="guide" style="left:482px;top:611px;height:19px;background:#d3d3d3"></div>
<div class="guide" style="left:420px;top:630px;height:19px;background:#d3d3d3"></div>
<div class="guide" style="left:435px;top:630px;height:19px;background:#d3d3d3"></div>
<div class="guide" style="left:451px;top:630px;height:19px;background:#d3d3d3"></div>
<div class="guide" style="left:466px;top:630px;height:19px;background:#939393"></div>
<div class="guide" style="left:482px;top:630px;height:19px;background:#d3d3d3"></div>
<div class="guide" style="left:497px;top:630px;height:19px;background:#d3d3d3"></div>
<div class="guide" style="left:420px;top:649px;height:19px;background:#d3d3d3"></div>
<div class="guide" style="left:435px;top:649px;height:19px;background:#d3d3d3"></div>
<div class="guide" style="left:451px;top:649px;height:19px;background:#d3d3d3"></div>
<div class="guide" style="left:466px;top:649px;height:19px;background:#939393"></div>
<div class="guide" style="left:482px;top:649px;height:19px;background:#d3d3d3"></div>
<div class="guide" style="left:497px;top:649px;height:19px;background:#d3d3d3"></div>
<div class="guide" style="left:420px;top:668px;height:19px;background:#d3d3d3"></div>
<div class="guide" style="left:435px;top:668px;height:19px;background:#d3d3d3"></div>
<div class="guide" style="left:451px;top:668px;height:19px;background:#d3d3d3"></div>
<div class="guide" style="left:466px;top:668px;height:19px;background:#939393"></div>
<div class="guide" style="left:482px;top:668px;height:19px;background:#d3d3d3"></div>
<div class="guide" style="left:497px;top:668px;height:19px;background:#d3d3d3"></div>
<div class="guide" style="left:512px;top:668px;height:19px;background:#d3d3d3"></div>
<div class="guide" style="left:420px;top:687px;height:19px;background:#d3d3d3"></div>
<div class="guide" style="left:435px;top:687px;height:19px;background:#d3d3d3"></div>
<div class="guide" style="left:451px;top:687px;height:19px;background:#d3d3d3"></div>
<div class="guide" style="left:466px;top:687px;height:19px;background:#939393"></div>
<div class="guide" style="left:482px;top:687px;height:19px;background:#d3d3d3"></div>
<div class="guide" style="left:497px;top:687px;height:19px;background:#d3d3d3"></div>
<div class="guide" style="left:420px;top:706px;height:19px;background:#d3d3d3"></div>
<div class="guide" style="left:435px;top:706px;height:19px;background:#d3d3d3"></div>
<div class="guide" style="left:451px;top:706px;height:19px;background:#d3d3d3"></div>
<div class="guide" style="left:466px;top:706px;height:19px;background:#939393"></div>
<div class="guide" style="left:482px;top:706px;height:19px;background:#d3d3d3"></div>
<div class="guide" style="left:497px;top:706px;height:19px;background:#d3d3d3"></div>
<div class="guide" style="left:420px;top:725px;height:19px;background:#d3d3d3"></div>
<div class="guide" style="left:435px;top:725px;height:19px;background:#d3d3d3"></div>
<div class="guide" style="left:451px;top:725px;height:19px;background:#d3d3d3"></div>
<div class="guide" style="left:466px;top:725px;height:19px;background:#939393"></div>
<div class="guide" style="left:482px;top:725px;height:19px;background:#d3d3d3"></div>
<div class="guide" style="left:497px;top:725px;height:19px;background:#d3d3d3"></div>
<div class="guide" style="left:512px;top:725px;height:19px;background:#d3d3d3"></div>
<div class="guide" style="left:420px;top:744px;height:19px;background:#d3d3d3"></div>
<div class="guide" style="left:435px;top:744px;height:19px;background:#d3d3d3"></div>
<div class="guide" style="left:451px;top:744px;height:19px;background:#d3d3d3"></div>
<div class="guide" style="left:466px;top:744px;height:19px;background:#939393"></div>
<div class="guide" style="left:482px;top:744px;height:19px;background:#d3d3d3"></div>
<div class="guide" style="left:497px;top:744px;height:19px;background:#d3d3d3"></div>
<div class="guide" style="left:420px;top:763px;height:19px;background:#d3d3d3"></div>
<div class="guide" style="left:435px;top:763px;height:19px;background:#d3d3d3"></div>
<div class="guide" style="left:451px;top:763px;height:19px;background:#d3d3d3"></div>
<div class="guide" style="left:466px;top:763px;height:19px;background:#939393"></div>
<div class="guide" style="left:482px;top:763px;height:19px;background:#d3d3d3"></div>
<div class="guide" style="left:420px;top:782px;height:19px;background:#d3d3d3"></div>
<div class="guide" style="left:435px;top:782px;height:19px;background:#d3d3d3"></div>
<div class="guide" style="left:451px;top:782px;height:19px;background:#d3d3d3"></div>
<div class="guide" style="left:466px;top:782px;height:19px;background:#939393"></div>
<div class="guide" style="left:482px;top:782px;height:19px;background:#d3d3d3"></div>
<div class="guide" style="left:420px;top:801px;height:19px;background:#d3d3d3"></div>
<div class="guide" style="left:435px;top:801px;height:19px;background:#d3d3d3"></div>
<div class="guide" style="left:451px;top:801px;height:19px;background:#d3d3d3"></div>
<div class="guide" style="left:466px;top:801px;height:19px;background:#939393"></div>
<div class="guide" style="left:482px;top:801px;height:19px;background:#d3d3d3"></div>
<div class="guide" style="left:497px;top:801px;height:19px;background:#d3d3d3"></div>
<div class="guide" style="left:420px;top:820px;height:19px;background:#d3d3d3"></div>
<div class="guide" style="left:435px;top:820px;height:19px;background:#d3d3d3"></div>
<div class="guide" style="left:451px;top:820px;height:19px;background:#d3d3d3"></div>
<div class="guide" style="left:466px;top:820px;height:19px;background:#939393"></div>
<div class="guide" style="left:482px;top:820px;height:19px;background:#d3d3d3"></div>
<div class="guide" style="left:497px;top:820px;height:19px;background:#d3d3d3"></div>
<div class="guide" style="left:420px;top:839px;height:19px;background:#d3d3d3"></div>
<div class="guide" style="left:435px;top:839px;height:19px;background:#d3d3d3"></div>
<div class="guide" style="left:451px;top:839px;height:19px;background:#d3d3d3"></div>
<div class="guide" style="left:466px;top:839px;height:19px;background:#939393"></div>
<div class="guide" style="left:482px;top:839px;height:19px;background:#d3d3d3"></div>
<div class="guide" style="left:497px;top:839px;height:19px;background:#d3d3d3"></div>
<div class="guide" style="left:420px;top:858px;height:21px;background:#d3d3d3"></div>
<div class="guide" style="left:435px;top:858px;height:21px;background:#d3d3d3"></div>
<div class="guide" style="left:451px;top:858px;height:21px;background:#d3d3d3"></div>
<div class="guide" style="left:466px;top:858px;height:21px;background:#939393"></div>
<div class="guide" style="left:482px;top:858px;height:21px;background:#d3d3d3"></div>
<div class="guide" style="left:497px;top:858px;height:21px;background:#d3d3d3"></div>
<div class="abs" style="left:420px;top:345px;width:1486px;height:19px;border-top:1px solid #eeeeee;border-bottom:1px solid #eeeeee"></div>
<div class="abs" style="left:574.44px;top:307px;width:123.152px;height:19px;background:#a8ac94"></div>
<div class="abs" style="left:466.28200000000004px;top:345px;width:7.697px;height:19px;background:rgba(0,100,0,0.1);border:1px solid #b9b9b9"></div>
<div class="abs" style="left:989.678px;top:345px;width:7.697px;height:19px;background:rgba(0,100,0,0.1);border:1px solid #b9b9b9"></div>
<div class="code" style="top:174px;left:420.5px">      <span class="t">&lt;/div&gt;</span></div>
<div class="ln" style="top:174px;left:360px">41</div>
<div class="code" style="top:193px;left:420.5px"></div>
<div class="ln" style="top:193px;left:360px">42</div>
<div class="code" style="top:212px;left:420.5px">      <span class="b">{%-</span> <span class="k">form</span> <span class="q">'product'</span><span class="p">,</span></div>
<div class="ln" style="top:212px;left:360px">43</div>
<div class="code" style="top:231px;left:420.5px">        <span class="t">product</span><span class="p">,</span></div>
<div class="ln" style="top:231px;left:360px">44</div>
<div class="code" style="top:250px;left:420.5px">        <span class="v">id:</span> <span class="v">product_form_id</span><span class="p">,</span></div>
<div class="ln" style="top:250px;left:360px">45</div>
<div class="code" style="top:269px;left:420.5px">        <span class="v">class:</span> <span class="q">'form'</span><span class="p">,</span></div>
<div class="ln" style="top:269px;left:360px">46</div>
<div class="code" style="top:288px;left:420.5px">        <span class="v">novalidate:</span> <span class="q">'novalidate'</span><span class="p">,</span></div>
<div class="ln" style="top:288px;left:360px">47</div>
<div class="code" style="top:307px;left:420.5px">        <span class="v">data-type:</span> <span class="q">'</span><span class="q hl">add-to-cart-form</span><span class="q">'</span></div>
<div class="ln" style="top:307px;left:360px">48</div>
<div class="code" style="top:326px;left:420.5px">      <span class="p">-</span><span class="b">%}</span></div>
<div class="ln" style="top:326px;left:360px">49</div>
<div class="code" style="top:345px;left:420.5px">      <span class="t bm">&lt;</span><span class="t">div</span> <span class="a">id</span><span class="p">=</span><span class="s">'aaa-form-builder-line-item-properties'</span> <span class="a">data-form-id</span><span class="p">=</span><span class="s">'18470'</span><span class="t bm">&gt;</span> <span class="t">&lt;/div&gt;</span>  <span class="t">&lt;script&gt;</span> <span class="b">function</span> <span class="f">isMyScriptLoaded</span><span class="br">()</span> <span class="p">{</span> <span class="b">var</span> <span class="v">url</span> <span class="p">=</span> <span class="q">'</span><span class="q ul">https://shopifycdn.aaawebstore.com/formbuilder/appfiles/aaa_</span></div>
<div class="ln" style="top:345px;left:360px;color:#171184">50</div>
<div class="code" style="top:364px;left:420.5px">        <span class="t">&lt;input</span></div>
<div class="ln" style="top:364px;left:360px">51</div>
<div class="code" style="top:383px;left:420.5px">          <span class="a">type</span><span class="p">=</span><span class="s">"hidden"</span></div>
<div class="ln" style="top:383px;left:360px">52</div>
<div class="code" style="top:402px;left:420.5px">          <span class="a">name</span><span class="p">=</span><span class="s">"id"</span></div>
<div class="ln" style="top:402px;left:360px">53</div>
<div class="code" style="top:421px;left:420.5px">          <span class="a">value</span><span class="p">=</span><span class="s">"</span><span class="t">{{</span> <span class="v">product.selected_or_first_available_variant.id</span> <span class="t">}}</span><span class="s">"</span></div>
<div class="ln" style="top:421px;left:360px">54</div>
<div class="code" style="top:440px;left:420.5px">          <span class="a">disabled</span></div>
<div class="ln" style="top:440px;left:360px">55</div>
<div class="code" style="top:459px;left:420.5px">          <span class="a">class</span><span class="p">=</span><span class="s">"product-variant-id"</span></div>
<div class="ln" style="top:459px;left:360px">56</div>
<div class="code" style="top:478px;left:420.5px">        <span class="t">&gt;</span></div>
<div class="ln" style="top:478px;left:360px">57</div>
<div class="code" style="top:497px;left:420.5px"></div>
<div class="ln" style="top:497px;left:360px">58</div>
<div class="code" style="top:516px;left:420.5px">        <span class="b">{%-</span> <span class="k">if</span> <span class="v">gift_card_recipient_feature_active</span> <span class="b">-%}</span></div>
<div class="ln" style="top:516px;left:360px">59</div>
<div class="code" style="top:535px;left:420.5px">          <span class="b">{%-</span> <span class="t">render</span> <span class="q">'</span><span class="q ul">gift-card-recipient-form</span><span class="q">'</span><span class="p">,</span> <span class="a">product:</span> <span class="s">product</span><span class="p">,</span> <span class="a">form:</span> <span class="s">form</span><span class="p">,</span> <span class="a">section:</span> <span class="s">section</span> <span class="b">-%}</span></div>
<div class="ln" style="top:535px;left:360px">60</div>
<div class="code" style="top:554px;left:420.5px">        <span class="b">{%-</span> <span class="k">endif</span> <span class="b">-%}</span></div>
<div class="ln" style="top:554px;left:360px">61</div>
<div class="code" style="top:573px;left:420.5px"></div>
<div class="ln" style="top:573px;left:360px">62</div>
<div class="code" style="top:592px;left:420.5px">        <span class="t">&lt;div</span> <span class="a">class</span><span class="p">=</span><span class="s">"product-form__buttons"</span><span class="t">&gt;</span></div>
<div class="ln" style="top:592px;left:360px">63</div>
<div class="code" style="top:611px;left:420.5px">          <span class="b">{%-</span> <span class="k">liquid</span></div>
<div class="ln" style="top:611px;left:360px">64</div>
<div class="code" style="top:630px;left:420.5px">            <span class="t">assign</span> <span class="v">check_against_inventory</span> <span class="p">=</span> <span class="b">true</span></div>
<div class="ln" style="top:630px;left:360px">65</div>
<div class="code" style="top:649px;left:420.5px">            <span class="k">if</span> <span class="v">product.selected_or_first_available_variant.inventory_management</span> <span class="b">!=</span> <span class="q">'shopify'</span> <span class="b">or</span>  <span class="v">product.selected_or_first_available_variant.inventory_policy</span> <span class="b">==</span> <span class="q">'continue'</span></div>
<div class="ln" style="top:649px;left:360px">66</div>
<div class="code" style="top:668px;left:420.5px">              <span class="t">assign</span> <span class="v">check_against_inventory</span> <span class="p">=</span> <span class="b">false</span></div>
<div class="ln" style="top:668px;left:360px">67</div>
<div class="code" style="top:687px;left:420.5px">            <span class="k">endif</span></div>
<div class="ln" style="top:687px;left:360px">68</div>
<div class="code" style="top:706px;left:420.5px">            <span class="k">if</span> <span class="v">product.selected_or_first_available_variant.quantity_rule.min</span> <span class="a">&gt;</span> <span class="v">product.selected_or_first_available_variant.inventory_quantity</span> <span class="b">and</span> <span class="v">check_against_inventory</span></div>
<div class="ln" style="top:706px;left:360px">69</div>
<div class="code" style="top:725px;left:420.5px">              <span class="t">assign</span> <span class="v">quantity_rule_soldout</span> <span class="p">=</span> <span class="b">true</span></div>
<div class="ln" style="top:725px;left:360px">70</div>
<div class="code" style="top:744px;left:420.5px">            <span class="k">endif</span></div>
<div class="ln" style="top:744px;left:360px">71</div>
<div class="code" style="top:763px;left:420.5px">          <span class="p">-</span><span class="b">%}</span></div>
<div class="ln" style="top:763px;left:360px">72</div>
<div class="code" style="top:782px;left:420.5px">          <span class="t">&lt;button</span></div>
<div class="ln" style="top:782px;left:360px">73</div>
<div class="code" style="top:801px;left:420.5px">            <span class="a">id</span><span class="p"> = </span><span class="s">"ProductSubmitButton-</span><span class="t">{{</span> <span class="v">section_id</span> <span class="t">}}</span><span class="s">"</span></div>
<div class="ln" style="top:801px;left:360px">74</div>
<div class="code" style="top:820px;left:420.5px">            <span class="a">type</span><span class="p">=</span><span class="s">"submit"</span></div>
<div class="ln" style="top:820px;left:360px">75</div>
<div class="code" style="top:839px;left:420.5px">            <span class="a">name</span><span class="p">=</span><span class="s">"add"</span></div>
<div class="ln" style="top:839px;left:360px">76</div>
<div class="code" style="top:858px;left:420.5px">            <span class="a">class</span><span class="p">=</span><span class="s">"product-form__submit button button--full-width </span><span class="t">{%</span> <span class="k">if</span> <span class="v">show_dynamic_checkout</span> <span class="t">%}</span><span class="s">button--secondary</span><span class="t">{%</span> <span class="k">else</span> <span class="t">%}</span><span class="s">button--primary</span><span class="t">{%</span> <span class="k">endif</span> <span class="t">%}</span><span class="s">"</span></div>
<div class="ln" style="top:858px;left:360px">77</div>
<div class="abs" style="left:881.3199999999999px;top:345px;width:2px;height:19px;background:#000"></div>
<div class="abs" style="left:351px;top:106px;width:1555px;height:68px;background:#fff;overflow:hidden;box-shadow:0 3px 2px -2px #dddddd">
<div class="code" style="top:0px;left:69.5px"><span class="t">&lt;div</span> <span class="br">{{</span> <span class="v">block.shopify_attributes</span> <span class="br">}}</span><span class="t">&gt;</span></div>
<div class="ln" style="top:0px;left:9px">13</div>
<div class="code" style="top:19px;left:69.5px">  <span class="b">{%-</span> <span class="k">if</span> <span class="v">product</span> <span class="b">!=</span> <span class="v">blank</span> <span class="b">-%}</span></div>
<div class="ln" style="top:19px;left:9px">14</div>
<div class="code" style="top:38px;left:69.5px">    <span class="t">&lt;product-form</span> <span class="a">class</span><span class="p">=</span><span class="s">"product-form"</span> <span class="a">data-hide-errors</span><span class="p">=</span><span class="s">"</span><span class="t">{{</span> <span class="v">gift_card_recipient_feature_active</span> <span class="t">}}</span><span class="s">"</span><span class="t">&gt;</span></div>
<div class="ln" style="top:38px;left:9px">27</div>
<div class="abs" style="left:0;top:57px;width:1555px;height:11px;overflow:hidden;background:#fff">
<div class="code" style="top:-8px;left:69.5px">      <span class="t">&lt;div</span> <span class="a">class</span><span class="p">=</span><span class="s">"product-form__error-message-wrapper"</span> <span class="a">role</span><span class="p">=</span><span class="s">"alert"</span> <span class="a">hidden</span><span class="t">&gt;</span></div>
<div class="ln" style="top:-8px;left:9px">28</div>
</div></div>
<div class="abs" style="left:1906px;top:106px;width:1px;height:773px;background:#efefef"></div>
<div class="abs" style="left:1906px;top:255px;width:6px;height:172px;background:#c1c1c1"></div>
<div class="abs" style="left:1907px;top:305px;width:5px;height:2px;background:#4d4d4d"></div>
<div class="abs" style="left:1911px;top:297px;width:1px;height:6px;background:#c9a36a"></div>
<div class="abs" style="left:1908px;top:106px;width:4px;height:2px;background:#3b3bff"></div>
<div class="abs" style="left:1907px;top:110px;width:5px;height:2px;background:#3b3bff"></div>
<div class="abs" style="left:1908px;top:129px;width:2px;height:2px;background:#0000ff"></div>

<svg class="abs" style="left:270px;top:320px" width="180" height="60" viewBox="270 320 180 60">
<line x1="288.5" y1="336" x2="414" y2="355" stroke="#ff0000" stroke-width="7.4" stroke-linecap="round"/>
<polygon points="413.8,345.8 441.8,359.6 410.5,364.2" fill="#ff0000"/>
</svg>
</body></html>
